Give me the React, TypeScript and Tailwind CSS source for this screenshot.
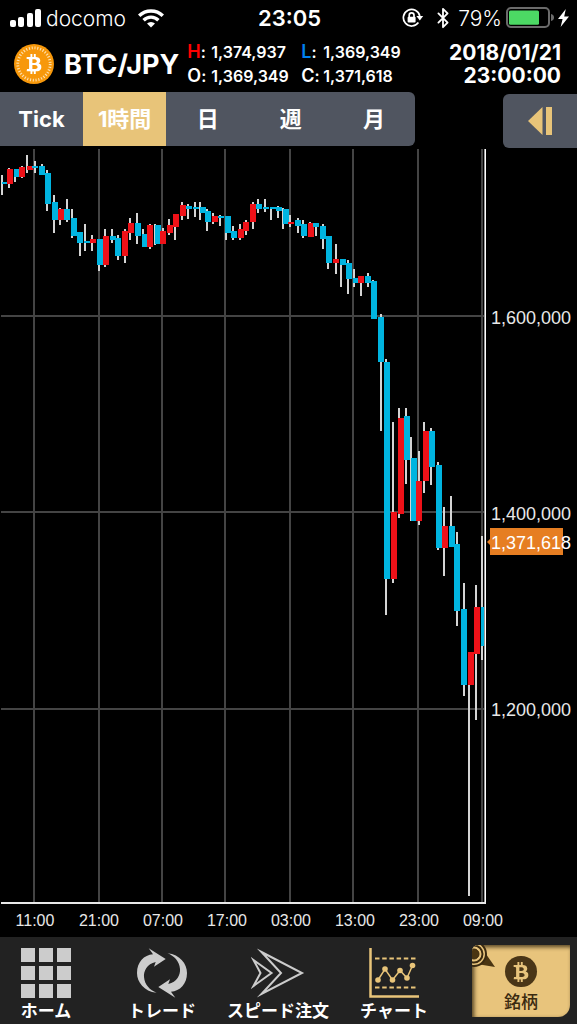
import { useState } from "react";
import clsx from "clsx";
import { FaBtc } from "react-icons/fa";
import { Bluetooth } from "lucide-react";

type Candle = {
  x: number; // left edge of the body
  wick: number;
  high: number;
  low: number;
  top: number;
  bottom: number;
  up: boolean;
};

// x, wick x, high, low, body top, body bottom, up
const RAW: [number, number, number, number, number, number, 0 | 1][] = [
  [2, 2, 175, 195, 182, 184, 0],
  [7, 9, 168, 188, 169, 184, 1],
  [14, 15, 169, 182, 169, 177, 0],
  [19, 22, 166, 178, 167, 177, 1],
  [27, 27, 155, 173, 166, 170, 1],
  [32, 35, 161, 173, 166, 168, 0],
  [39, 42, 164, 175, 166, 175, 0],
  [45, 47, 170, 211, 173, 204, 0],
  [52, 54, 195, 233, 202, 220, 0],
  [58, 60, 208, 225, 209, 220, 1],
  [64, 67, 199, 222, 209, 220, 0],
  [71, 72, 209, 238, 218, 236, 0],
  [77, 80, 232, 256, 232, 243, 0],
  [84, 85, 224, 251, 241, 243, 0],
  [90, 92, 235, 251, 239, 243, 1],
  [97, 99, 239, 271, 239, 265, 0],
  [103, 105, 229, 267, 236, 265, 1],
  [110, 112, 229, 243, 236, 240, 0],
  [115, 118, 235, 260, 238, 256, 0],
  [122, 125, 229, 263, 231, 256, 1],
  [128, 130, 218, 240, 223, 233, 1],
  [135, 137, 213, 244, 223, 236, 0],
  [142, 143, 229, 247, 234, 247, 0],
  [147, 150, 224, 249, 225, 247, 1],
  [155, 155, 224, 245, 225, 244, 0],
  [160, 163, 228, 244, 231, 244, 1],
  [167, 169, 219, 235, 225, 233, 1],
  [173, 175, 214, 240, 214, 227, 1],
  [180, 182, 202, 220, 205, 216, 1],
  [186, 188, 204, 219, 206, 209, 0],
  [193, 195, 202, 217, 207, 209, 0],
  [200, 200, 202, 220, 207, 213, 0],
  [205, 207, 209, 231, 211, 222, 0],
  [212, 213, 213, 224, 216, 222, 1],
  [218, 220, 215, 226, 216, 218, 0],
  [225, 226, 216, 240, 216, 233, 0],
  [231, 233, 226, 240, 231, 238, 0],
  [238, 240, 224, 240, 229, 238, 1],
  [243, 246, 220, 235, 222, 231, 1],
  [250, 253, 202, 229, 204, 222, 1],
  [256, 258, 199, 213, 204, 209, 0],
  [263, 265, 199, 212, 207, 209, 0],
  [270, 271, 207, 220, 207, 209, 0],
  [276, 278, 206, 218, 207, 211, 0],
  [283, 283, 208, 229, 209, 224, 0],
  [288, 290, 215, 227, 222, 224, 1],
  [295, 298, 218, 233, 220, 226, 0],
  [301, 303, 220, 238, 224, 236, 0],
  [308, 310, 222, 237, 223, 237, 1],
  [313, 316, 223, 236, 223, 227, 0],
  [320, 323, 224, 249, 226, 239, 0],
  [326, 328, 236, 269, 236, 263, 0],
  [333, 336, 244, 274, 259, 263, 1],
  [340, 341, 259, 287, 259, 265, 0],
  [346, 348, 260, 294, 263, 279, 0],
  [353, 354, 269, 287, 278, 283, 0],
  [358, 361, 276, 296, 276, 283, 1],
  [365, 368, 273, 287, 276, 283, 0],
  [371, 373, 280, 319, 281, 319, 0],
  [378, 381, 314, 431, 317, 362, 0],
  [384, 386, 359, 615, 362, 579, 0],
  [391, 393, 422, 583, 512, 579, 1],
  [398, 399, 408, 518, 418, 514, 1],
  [404, 406, 408, 484, 416, 460, 0],
  [411, 411, 437, 521, 458, 521, 0],
  [416, 419, 451, 525, 481, 521, 1],
  [423, 424, 422, 493, 431, 481, 1],
  [429, 431, 428, 485, 431, 467, 0],
  [436, 438, 462, 550, 465, 548, 0],
  [442, 444, 507, 576, 526, 548, 1],
  [449, 451, 496, 547, 526, 547, 0],
  [454, 457, 532, 626, 544, 611, 0],
  [461, 464, 583, 696, 609, 685, 0],
  [468, 469, 652, 896, 652, 685, 1],
  [474, 476, 585, 720, 607, 654, 1],
  [481, 482, 536, 660, 607, 646, 0],
];

const CANDLES: Candle[] = RAW.map(([x, wick, high, low, top, bottom, up]) => ({
  x, wick, high, low, top, bottom, up: up === 1,
}));

const GRID_X = [34, 99, 162, 225, 290, 353, 418, 482];
const GRID_Y = [316, 512, 709];
const TIMES = ["11:00", "21:00", "07:00", "17:00", "03:00", "13:00", "23:00", "09:00"];
const PRICES = ["1,600,000", "1,400,000", "1,200,000"];
const PERIODS = ["Tick", "1時間", "日", "週", "月"];

function StatusBar() {
  return (
    <div className="grid h-9 grid-cols-[1fr_auto_1fr] items-center pl-[10px] pr-2 text-[22px] leading-none">
      <div className="flex items-center">
        <svg width="32" height="20" viewBox="0 0 32 20" fill="#fff">
          <rect x="0" y="12" width="6" height="7" rx="2" />
          <rect x="8" y="9" width="6" height="10" rx="2" />
          <rect x="17" y="5" width="6" height="14" rx="2" />
          <rect x="25" y="1" width="6" height="18" rx="2" />
        </svg>
        <span className="ml-1 text-[21px] font-light">docomo</span>
        <svg className="ml-3" width="26" height="19" viewBox="0 0 26 19" fill="none" stroke="#fff" strokeWidth="3.4">
          <path d="M1.2 6.8a16.8 16.8 0 0 1 23.6 0" />
          <path d="M5.6 11.2a10.5 10.5 0 0 1 14.8 0" />
          <path d="M13 18.6 9 14.6a5.8 5.8 0 0 1 8 0z" fill="#fff" stroke="none" />
        </svg>
      </div>
      <span className="font-semibold">23:05</span>
      <div className="flex items-center justify-end">
        <svg width="22" height="20" viewBox="0 0 22 20" fill="none" stroke="#fff" strokeWidth="1.7">
          <path d="M16.4 14.6A8.3 8.3 0 1 1 17.8 8" />
          <path d="M14.4 8h6.8l-3.4 4.4z" fill="#fff" stroke="none" />
          <rect x="5.6" y="8.8" width="8" height="5.8" rx="1" fill="#fff" stroke="none" />
          <path d="M7.2 9V7.2a2.4 2.4 0 0 1 4.8 0V9" />
        </svg>
        <Bluetooth className="ml-2" size={22} strokeWidth={2} />
        <span className="ml-1 text-[21px] font-light">79%</span>
        <svg className="ml-1" width="48" height="22" viewBox="0 0 48 22">
          <rect x="1" y="1" width="42" height="19" rx="4" fill="none" stroke="#6b6b6b" strokeWidth="2" />
          <rect x="3" y="3.4" width="30" height="14.4" rx="1.5" fill="#4cd964" />
          <path d="M45 7q3 .8 3 3.5T45 14z" fill="#6b6b6b" />
        </svg>
        <svg className="ml-1" width="11" height="18" viewBox="0 0 11 18" fill="#fff">
          <path d="M7.8 0 0 10h4.6L2.6 18 11 7.4H6.2z" />
        </svg>
      </div>
    </div>
  );
}

function CoinLogo() {
  return (
    <div className="relative size-10 shrink-0">
      <svg viewBox="0 0 40 40" className="size-10">
        <circle cx="20" cy="20" r="20" fill="#f7980b" />
        <circle cx="20" cy="20" r="16.2" fill="none" stroke="#fde0b0" strokeWidth="2.8" strokeDasharray="1.1 1.727" />
      </svg>
      <FaBtc className="absolute inset-0 m-auto size-5 text-white" />
    </div>
  );
}

function Quote({ label, value, color }: { label: string; value: string; color?: string }) {
  return (
    <div className="flex items-baseline justify-between leading-[23px]">
      <dt className="text-lg leading-[23px]">
        <span className={color}>{label}</span>
        <span className="text-base">:</span>
      </dt>
      <dd className="w-20 whitespace-nowrap text-base leading-[23px]">{value}</dd>
    </div>
  );
}

function Header() {
  return (
    <header className="flex h-14 items-center pl-[14px] pr-4 font-bold">
      <CoinLogo />
      <h1 className="ml-[10px] text-[27px] leading-none">BTC/JPY</h1>
      <dl className="ml-2 grid grid-cols-[104px_102px] gap-x-[10px] font-semibold">
        <Quote label="H" value="1,374,937" color="text-[#f00]" />
        <Quote label="L" value="1,369,349" color="text-[#0080f0]" />
        <Quote label="O" value="1,369,349" />
        <Quote label="C" value="1,371,618" />
      </dl>
      <time className="ml-auto text-right text-[21px] leading-[23px]" dateTime="2018-01-21T23:00:00">
        2018/01/21
        <br />
        23:00:00
      </time>
    </header>
  );
}

function PeriodBar({ value, onChange }: { value: string; onChange: (v: string) => void }) {
  return (
    <div className="flex items-start justify-between">
      <div className="grid h-[54px] w-[72%] grid-cols-5 overflow-hidden rounded-r-md bg-[#505560]">
        {PERIODS.map((p) => (
          <button
            key={p}
            onClick={() => onChange(p)}
            aria-pressed={p === value}
            className={clsx("pt-px text-[22px] font-bold", p === value && "bg-[#e8c479]")}
          >
            {p}
          </button>
        ))}
      </div>
      <button
        aria-label="Open panel"
        className="mt-[2px] flex h-[54px] w-[74px] items-center justify-center rounded-l-md bg-[#505560]"
      >
        <svg width="24" height="28" viewBox="0 0 24 28" fill="#e8c479">
          <path d="M0 14 14.5 0v28z" />
          <path d="M18 0h6v28h-6z" />
        </svg>
      </button>
    </div>
  );
}

function Chart() {
  return (
    <main className="mt-px">
      <div className="flex">
        <svg viewBox="0 149 487 755" className="min-w-0 flex-1" shapeRendering="crispEdges">
          {GRID_X.map((x) => (
            <rect key={x} x={x - 1} y={149} width={2} height={754} fill="#444" />
          ))}
          {GRID_Y.map((y) => (
            <rect key={y} x={1} y={y - 1} width={484} height={2} fill="#444" />
          ))}
          {CANDLES.map((c) => (
            <g key={c.x}>
              <rect x={c.wick - 1} y={c.high} width={2} height={c.low - c.high} fill="#d4d4d4" />
              <rect
                x={c.x}
                y={c.top}
                width={Math.min(6, 485 - c.x)}
                height={c.bottom - c.top}
                fill={c.up ? "#ee1118" : "#00b4e0"}
              />
            </g>
          ))}
          <rect x={485} y={149} width={1} height={755} fill="#fff" />
          <rect x={484} y={149} width={1} height={755} fill="#999" />
          <rect x={1} y={902} width={485} height={2} fill="#e8e8e8" />
        </svg>
        <div className="relative w-[90px] shrink-0 pl-1 pt-[71px] font-['Liberation_Sans',sans-serif] text-lg text-[#e8e8e8]">
          {PRICES.map((p) => (
            <div key={p} className="flex h-[196px] items-center">
              {p}
            </div>
          ))}
          <div className="absolute left-0 top-[379px] flex items-center">
            <svg width="3" height="6" viewBox="0 0 3 6" fill="#e67e22">
              <path d="M3 0v6L0 3z" />
            </svg>
            <div className="h-[27px] w-[73px] whitespace-nowrap bg-[#e67e22] pl-px leading-[30px] text-white">
              1,371,618
            </div>
          </div>
        </div>
      </div>
      <div className="grid h-[33px] grid-cols-8 items-center pl-[3px] pr-[62px] pt-px text-center font-['Liberation_Sans',sans-serif] text-base text-[#e8e8e8]">
        {TIMES.map((t) => (
          <span key={t}>{t}</span>
        ))}
      </div>
    </main>
  );
}

function HomeIcon() {
  return (
    <svg width="50" height="50" viewBox="0 0 50 50" fill="#ccc">
      {[0, 18, 36].map((y) =>
        [0, 18, 36].map((x) => <rect key={`${x}-${y}`} x={x} y={y} width="14" height="14" />)
      )}
    </svg>
  );
}

function TradeIcon() {
  const arrow = "M11.7.3 28.7 11 17 18.7 18.7 14C10 16 6.5 23 7 29c.6 8 6 13 12.500 15.700C7 43.500 0 34 0 25 0 14 7 7 16 6.300z";
  return (
    <svg width="50" height="50" viewBox="0 0 50 50" fill="#ccc">
      <path d={arrow} />
      <path d={arrow} transform="rotate(180 25 25)" />
    </svg>
  );
}

function SpeedIcon() {
  return (
    <svg width="54" height="50" viewBox="0 0 54 50" fill="none" stroke="#ccc" strokeWidth="2" strokeMiterlimit="10">
      <path d="M10.500 4 51 25l-40.500 21 19.500-21z" />
      <path d="M2.500 12 20.500 25l-18 13 7-13z" />
    </svg>
  );
}

function ChartIcon() {
  const points = [[9, 32], [16, 21], [23.5, 32], [31, 22.5], [38, 30], [43.5, 17.5]];
  return (
    <svg width="50" height="50" viewBox="0 0 50 50" fill="none" stroke="#e8c479">
      <path d="M1.5 0v48.5H50" strokeWidth="2.5" />
      <path d="M6 10.5h41M6 39.5h41" strokeWidth="2.2" strokeDasharray="4.5 2.7" />
      <polyline points={points.join(" ")} strokeWidth="1.5" />
      {points.map(([x, y]) => (
        <circle key={x} cx={x} cy={y} r="2.8" fill="#e8c479" stroke="none" />
      ))}
    </svg>
  );
}

const NAV = [
  { label: "ホーム", icon: <HomeIcon /> },
  { label: "トレード", icon: <TradeIcon /> },
  { label: "スピード注文", icon: <SpeedIcon /> },
  { label: "チャート", icon: <ChartIcon /> },
];

function BottomNav() {
  return (
    <nav className="flex h-[87px] bg-[#222] pr-[7px]">
      <div className="-ml-3 grid flex-1 grid-cols-4">
        {NAV.map((n) => (
          <button key={n.label} className="flex flex-col items-center whitespace-nowrap pt-[11px] text-[17px] font-bold leading-[26px]">
            {n.icon}
            <span>{n.label}</span>
          </button>
        ))}
      </div>
      <button className="relative ml-5 mt-2 flex h-[72px] w-[98px] flex-col items-center overflow-hidden rounded-br-xl rounded-tl-md bg-[#e8c47c] pt-[11px] text-[17px] font-medium leading-[30px] text-[#3a2a10] shadow-[inset_2px_2px_4px_rgba(40,28,8,0.8)]">
        <svg className="absolute left-0 top-0" width="26" height="24" viewBox="0 0 26 24" fill="none" stroke="#3a2a10">
          <path d="M14 9 23 22 8 19.5z" fill="#4a3512" stroke="none" />
          <circle cx="2" cy="9" r="12" fill="#e8c47c" strokeWidth="2" />
          <circle cx="2" cy="9" r="8.5" strokeWidth="2" />
          <circle cx="2" cy="9" r="5" fill="#4a3512" strokeWidth="1" />
        </svg>
        <span className="flex size-8 items-center justify-center rounded-full bg-[#4a3617]">
          <FaBtc className="size-5 text-[#e8c47c]" />
        </span>
        <span>銘柄</span>
      </button>
    </nav>
  );
}

export default function App() {
  const [period, setPeriod] = useState("1時間");
  return (
    <div className="bg-black font-['Inter','Noto_Sans_CJK_JP',sans-serif] text-white">
      <StatusBar />
      <Header />
      <PeriodBar value={period} onChange={setPeriod} />
      <Chart />
      <BottomNav />
    </div>
  );
}
